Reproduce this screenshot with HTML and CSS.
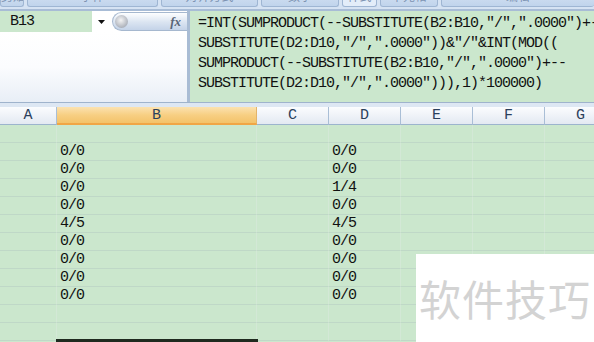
FILE: index.html
```html
<!DOCTYPE html>
<html lang="zh-CN">
  <head>
    <meta charset="utf-8">
    <title>B13 公式</title>
    <link rel="stylesheet" href="styles.css">
  </head>
  <body>
    <div class="app">
      <div class="ribbon">
        <div class="group" style="width:24px"><span>剪贴板</span></div>
        <div class="group" style="width:131px"><span>字体</span></div>
        <div class="group" style="width:97px"><span>对齐方式</span></div>
        <div class="group" style="width:78px"><span>数字</span></div>
        <div class="group active" style="width:35px"><span>样式</span></div>
        <div class="group" style="width:58px"><span>单元格</span></div>
        <div class="group" style="width:150px"><span>编辑</span></div>
      </div>
      <div class="bar">
        <div class="namepane">
          <div class="namerow">
            <div class="namebox">B13</div>
            <div class="drop">
              <svg width="7" height="4" viewBox="0 0 7 4"><path d="M0 0h7L3.5 4z" fill="#111"/></svg>
            </div>
            <div class="fxbtn">
              <span class="knob"></span>
              <i class="fx">fx</i>
            </div>
          </div>
          <div class="blank"></div>
        </div>
        <div class="formula">
          <div class="fline">=INT(SUMPRODUCT(--SUBSTITUTE(B2:B10,"/",".0000")+--</div>
          <div class="fline">SUBSTITUTE(D2:D10,"/",".0000"))&amp;"/"&amp;INT(MOD((</div>
          <div class="fline">SUMPRODUCT(--SUBSTITUTE(B2:B10,"/",".0000")+--</div>
          <div class="fline">SUBSTITUTE(D2:D10,"/",".0000"))),1)*100000)</div>
        </div>
      </div>
      <div class="split"></div>
      <div class="sheet">
        <div class="head">A</div><div class="head picked">B</div><div class="head">C</div><div class="head">D</div><div class="head">E</div><div class="head">F</div><div class="head">G</div>

        <div class="cell"></div><div class="cell"></div><div class="cell"></div><div class="cell"></div><div class="cell"></div><div class="cell"></div><div class="cell"></div>
        <div class="cell"></div><div class="cell">0/0</div><div class="cell"></div><div class="cell">0/0</div><div class="cell"></div><div class="cell"></div><div class="cell"></div>
        <div class="cell"></div><div class="cell">0/0</div><div class="cell"></div><div class="cell">0/0</div><div class="cell"></div><div class="cell"></div><div class="cell"></div>
        <div class="cell"></div><div class="cell">0/0</div><div class="cell"></div><div class="cell">1/4</div><div class="cell"></div><div class="cell"></div><div class="cell"></div>
        <div class="cell"></div><div class="cell">0/0</div><div class="cell"></div><div class="cell">0/0</div><div class="cell"></div><div class="cell"></div><div class="cell"></div>
        <div class="cell"></div><div class="cell">4/5</div><div class="cell"></div><div class="cell">4/5</div><div class="cell"></div><div class="cell"></div><div class="cell"></div>
        <div class="cell"></div><div class="cell">0/0</div><div class="cell"></div><div class="cell">0/0</div><div class="cell"></div><div class="cell"></div><div class="cell"></div>
        <div class="cell"></div><div class="cell">0/0</div><div class="cell"></div><div class="cell">0/0</div><div class="cell"></div><div class="cell"></div><div class="cell"></div>
        <div class="cell"></div><div class="cell">0/0</div><div class="cell"></div><div class="cell">0/0</div><div class="cell"></div><div class="cell"></div><div class="cell"></div>
        <div class="cell"></div><div class="cell">0/0</div><div class="cell"></div><div class="cell">0/0</div><div class="cell"></div><div class="cell"></div><div class="cell"></div>
        <div class="cell"></div><div class="cell"></div><div class="cell"></div><div class="cell"></div><div class="cell"></div><div class="cell"></div><div class="cell"></div>
        <div class="cell"></div><div class="cell sel-top"></div><div class="cell"></div><div class="cell"></div><div class="cell"></div><div class="cell"></div><div class="cell"></div>
      </div>
      <div class="watermark">软件技巧</div>
    </div>
  </body>
</html>
```
FILE: styles.css
```css
/* Excel 2007 style sheet view */
body {
  margin: 0;
  background: #cbe7cd;
}
.app {
  position: relative;
  width: 594px;
  height: 342px;
  overflow: hidden;
  font-family: "Liberation Mono", "DejaVu Sans Mono", monospace;
}

/* ribbon group labels, cut off at the top */
.ribbon {
  display: flex;
  gap: 3px;
  height: 8px;
  padding-bottom: 1px;
  background: #d6e3f3;
  border-bottom: 2px solid #a8bcd6;
}
.group {
  flex: none;
  height: 7px;
  overflow: hidden;
  white-space: nowrap;
  background: linear-gradient(#c9daef, #c0d4ec);
  border: 1px solid #9fb6d3;
  border-top: none;
  border-radius: 0 0 3px 3px;
  box-sizing: border-box;
  text-align: center;
  font: 12px/12px "Noto Sans CJK SC", sans-serif;
  color: #7d93b2;
}
.group span {
  position: relative;
  top: -10px;
}
.group.active {
  background: #e3edf9;
}
.group:last-child {
  flex: 1;
  border-right: none;
}

/* name box + formula bar */
.bar {
  display: flex;
  height: 91px;
}
.namepane {
  width: 187px;
  display: flex;
  flex-direction: column;
  border-right: 3px solid #a9bcd4;
}
.namerow {
  display: flex;
  height: 21px;
  background: #fff;
}
.namebox {
  width: 82px;
  padding-left: 10px;
  background: #cbe7cd;
  font-size: 15px;
  letter-spacing: -1px;
  line-height: 21px;
  color: #111;
}
.drop {
  width: 18px;
  display: flex;
  align-items: center;
  justify-content: center;
}
.fxbtn {
  flex: 1;
  display: flex;
  align-items: center;
  justify-content: space-between;
  margin: 1px 0 1px 2px;
  padding: 0 6px 0 2px;
  border-radius: 10px 0 0 10px;
  background: linear-gradient(#fdfeff, #dae4f1 55%, #c4d3e8);
  border: 1px solid #a6b8cf;
  border-right: none;
}
.knob {
  width: 13px;
  height: 13px;
  border-radius: 50%;
  background: radial-gradient(circle at 45% 40%, #f4f4f4, #b8bcc4 60%, #8f96a3);
}
.fx {
  font: italic bold 13px "Liberation Serif", serif;
  color: #5a6577;
}
.blank {
  flex: 1;
  background: linear-gradient(#fff, #fbfcfe 50%, #e8eef6);
}
.formula {
  flex: 1;
  padding: 3px 0 0 8px;
  overflow: hidden;
  font-size: 15px;
  letter-spacing: -1px;
  line-height: 20px;
  color: #111;
  background: #cbe7cd;
}
.fline {
  white-space: pre;
}

.split {
  height: 4px;
  border-top: 1px solid #9fb3cc;
  background: #dde7f3;
}

/* grid */
.sheet {
  display: grid;
  grid-template-columns: 57px 200px 72px 72px 72px 72px 72px;
  grid-auto-rows: 18px;
}
.head {
  box-sizing: border-box;
  border-right: 1px solid #a9bed6;
  border-bottom: 1px solid #9cb4cd;
  background: linear-gradient(#fbfcfe, #e3e9f2);
  text-align: center;
  font-size: 15px;
  line-height: 17px;
  color: #2b3f5c;
}
.head.picked {
  background: linear-gradient(#fbe2b0, #f7cf83 50%, #f3c36a);
  border-bottom: 2px solid #f0a646;
  border-right-color: #e3b46a;
}
.cell {
  box-sizing: border-box;
  border-right: 1px solid #d3e8d6;
  border-bottom: 1px solid #bfd8c7;
  padding-left: 3px;
  font-size: 15px;
  letter-spacing: -1px;
  line-height: 18px;
  color: #111;
}
.sel-top {
  position: relative;
}
.sel-top::after {
  content: "";
  position: absolute;
  left: -1px;
  right: -2px;
  bottom: -2px;
  height: 3px;
  background: #1f2a1f;
}

.watermark {
  position: absolute;
  left: 416px;
  top: 254px;
  width: 178px;
  height: 88px;
  background: #fff;
  text-align: center;
  font: 42px/88px "Noto Sans CJK SC", sans-serif;
  color: #d3d3d3;
  letter-spacing: 1px;
}
```
